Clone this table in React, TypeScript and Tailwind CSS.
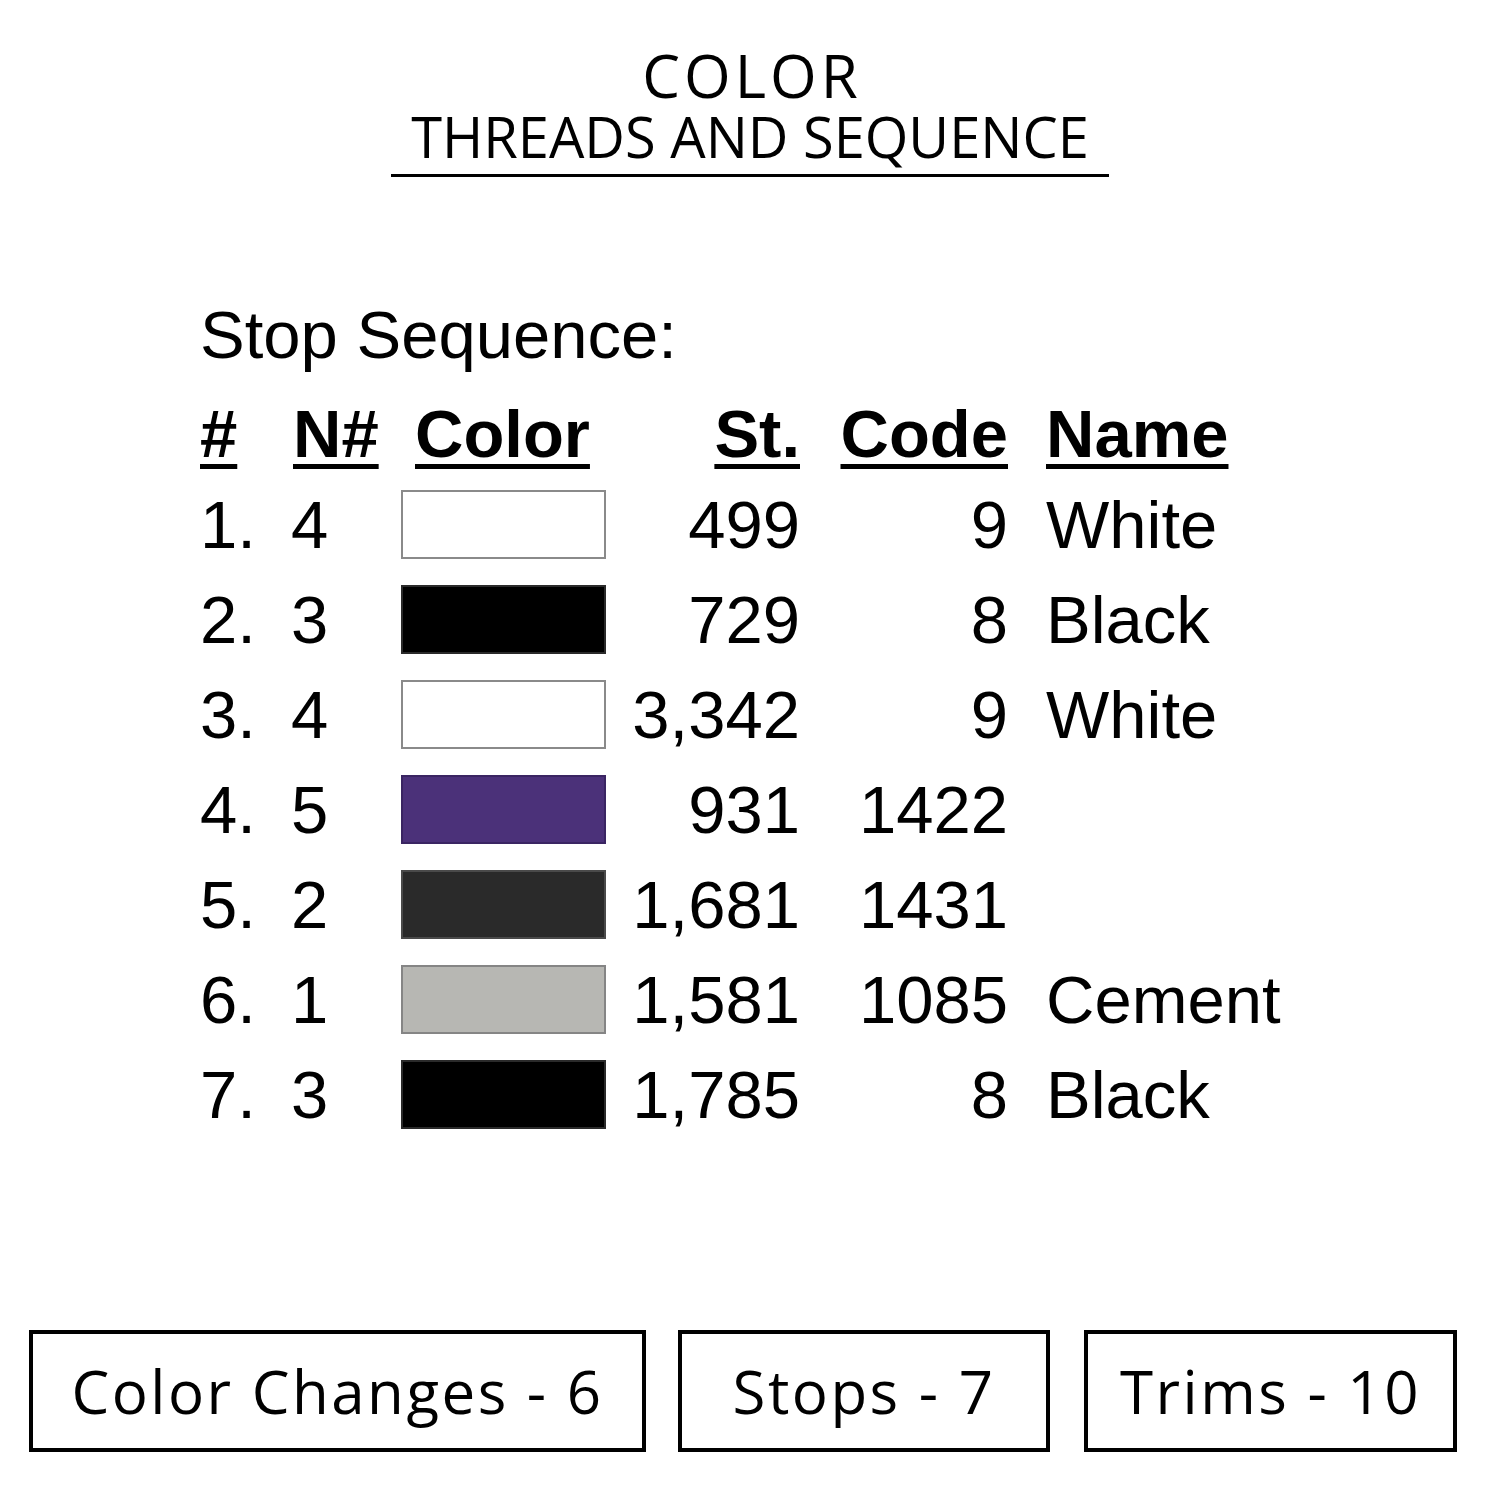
const rows = [
  { n: "1.", needle: "4", swatch: "bg-white border-[#8a8a8a]", st: "499", code: "9", name: "White" },
  { n: "2.", needle: "3", swatch: "bg-black border-[#2a2a2a]", st: "729", code: "8", name: "Black" },
  { n: "3.", needle: "4", swatch: "bg-white border-[#8a8a8a]", st: "3,342", code: "9", name: "White" },
  { n: "4.", needle: "5", swatch: "bg-[#4b3179] border-[#3a2562]", st: "931", code: "1422", name: "" },
  { n: "5.", needle: "2", swatch: "bg-[#2a2a2a] border-[#4a4a4a]", st: "1,681", code: "1431", name: "" },
  { n: "6.", needle: "1", swatch: "bg-[#b7b7b3] border-[#858585]", st: "1,581", code: "1085", name: "Cement" },
  { n: "7.", needle: "3", swatch: "bg-black border-[#2a2a2a]", st: "1,785", code: "8", name: "Black" },
];

const stats = [
  { label: "Color Changes - 6", w: "w-[617px]", ml: "ml-[29px]" },
  { label: "Stops - 7", w: "w-[372px]", ml: "ml-[32px]" },
  { label: "Trims - 10", w: "w-[373px]", ml: "ml-[34px]" },
];

export default function App() {
  return (
    <div className="w-[1500px] h-[1500px] bg-white text-black flex flex-col">
      {/* Title */}
      <div className="flex flex-col items-center pt-[47px] font-['Open_Sans',sans-serif]">
        <div className="text-[60px] leading-[56px] font-medium tracking-[4px] pl-[4px]">COLOR</div>
        <div className="mt-[8px] px-[20px] pb-[13px] border-b-[3px] border-black text-[56px] leading-[50px] font-normal">
          THREADS AND SEQUENCE
        </div>
      </div>

      {/* Stop sequence table */}
      <div className="pl-[200px] mt-[110px] font-['Liberation_Sans',Arial,sans-serif] text-[67px] leading-[95px]">
        <div className="mb-[4px]">Stop Sequence:</div>
        <div className="grid grid-cols-[91px_110px_205px_194px_208px_1fr] h-[91px] font-bold">
          <span className="underline decoration-[5px] underline-offset-[7px]">#</span>
          <span className="underline decoration-[5px] underline-offset-[7px] pl-[2px]">N#</span>
          <span className="pl-[14px]"><span className="underline decoration-[5px] underline-offset-[7px]">Color</span></span>
          <span className="text-right"><span className="underline decoration-[5px] underline-offset-[7px]">St.</span></span>
          <span className="text-right"><span className="underline decoration-[5px] underline-offset-[7px]">Code</span></span>
          <span className="pl-[38px]"><span className="underline decoration-[5px] underline-offset-[7px]">Name</span></span>
        </div>
        {rows.map((r) => (
          <div key={r.n} className="grid grid-cols-[91px_110px_205px_194px_208px_1fr] h-[95px] items-center">
            <span>{r.n}</span>
            <span>{r.needle}</span>
            <div className={`h-[69px] border-2 ${r.swatch}`} />
            <span className="text-right">{r.st}</span>
            <span className="text-right">{r.code}</span>
            <span className="pl-[38px]">{r.name}</span>
          </div>
        ))}
      </div>

      {/* Summary boxes */}
      <div className="mt-auto mb-[48px] flex font-['Open_Sans',sans-serif]">
        {stats.map((s) => (
          <div key={s.label} className={`${s.w} ${s.ml} h-[122px] border-4 border-black flex items-center justify-center text-[60px] leading-none tracking-[2.5px]`}>
            {s.label}
          </div>
        ))}
      </div>
    </div>
  );
}
